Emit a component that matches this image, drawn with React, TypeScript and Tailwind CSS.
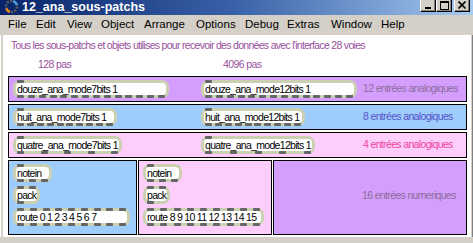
import React from 'react'

const font = { fontFamily: '"Liberation Sans", Arial, sans-serif' }

function spots(w: number, n: number) {
  if (n === 0) return []
  if (n === 1) return [4]
  const span = w - 8 - 7
  return Array.from({ length: n }, (_, i) => 4 + (span * i) / (n - 1))
}

type BoxProps = {
  label: string
  w: number
  top?: number[]
  bottom?: number[]
}

const ObjBox = ({ label, w, top = [], bottom = [] }: BoxProps) => {
  return (
    <div
      className="relative h-[18px] shrink-0 rounded-[7px] border-[3px] border-[#cbd0b2] bg-white flex items-center pl-px text-[10.5px] tracking-[-0.7px] leading-none text-black whitespace-nowrap"
      style={{ width: w }}
    >
      {label}
      {top.map((x, i) => (
        <span
          key={'t' + i}
          className="absolute top-[-3px] h-[3px] w-[7px] rounded-[1px] bg-[#666666]"
          style={{ left: x - 3 }}
        />
      ))}
      {bottom.map((x, i) => (
        <span
          key={'b' + i}
          className="absolute bottom-[-3px] h-[3px] w-[7px] rounded-[1px] bg-[#666666]"
          style={{ left: x - 3 }}
        />
      ))}
    </div>
  )
}

const Row = ({
  bg,
  left,
  right,
  text,
  color,
}: {
  bg: string
  left: React.ReactNode
  right: React.ReactNode
  text: string
  color: string
}) => {
  return (
    <div className={`h-[26px] border border-black flex items-center pl-[4px] ${bg}`}>
      <div className="w-[188px]">{left}</div>
      <div className="w-[162px]">{right}</div>
      <p className={`text-[10.5px] tracking-[-0.65px] ${color}`}>{text}</p>
    </div>
  )
}

const WinBtn = ({ children }: { children: React.ReactNode }) => (
  <div className="w-[16px] h-[14px] bg-[#d4d0c8] border border-t-white border-l-white border-r-black border-b-black shadow-[inset_-1px_-1px_#808080] flex items-center justify-center">
    {children}
  </div>
)

function App() {
  const menu: [string, number][] = [
    ['File', 28],
    ['Edit', 31],
    ['View', 34],
    ['Object', 43],
    ['Arrange', 52],
    ['Options', 49],
    ['Debug', 42],
    ['Extras', 44],
    ['Window', 50],
    ['Help', 40],
  ]

  return (
    <div className="w-[473px] h-[243px] overflow-hidden bg-[#d4d0c8] flex flex-col" style={font}>
      {/* title bar */}
      <div className="h-[15px] bg-linear-to-r from-[#0a246a] via-[#3a62a8] to-[#a6caf0] flex items-start">
        <svg className="ml-[4px] mt-[-1px]" width="15" height="15" viewBox="0 0 15 15">
          <circle cx="7.5" cy="7.5" r="5.5" fill="none" stroke="#5a5a5a" strokeWidth="2.4" strokeDasharray="2.2 1.2" />
          <path d="M2.3 9.5 A5.5 5.5 0 0 0 6 12.8" fill="none" stroke="#f08a1c" strokeWidth="2.4" />
          <path d="M9 2.2 A5.5 5.5 0 0 1 12.8 6" fill="none" stroke="#4aa0e0" strokeWidth="2.4" />
        </svg>
        <span className="ml-[3px] text-[12.5px] font-bold text-white leading-[14px]">12_ana_sous-patchs</span>
        <div className="ml-auto mr-[3px] mt-[-2px] flex">
          <WinBtn>
            <svg width="8" height="8" viewBox="0 0 8 8">
              <rect x="1" y="6" width="6" height="2" fill="black" />
            </svg>
          </WinBtn>
          <WinBtn>
            <svg width="9" height="9" viewBox="0 0 9 9">
              <rect x="0.5" y="0.5" width="8" height="8" fill="none" stroke="black" />
              <rect x="0" y="0" width="9" height="2" fill="black" />
            </svg>
          </WinBtn>
          <div className="w-[2px]" />
          <WinBtn>
            <svg width="8" height="8" viewBox="0 0 8 8">
              <path d="M0.5 0.5 L7.5 7.5 M7.5 0.5 L0.5 7.5" stroke="black" strokeWidth="1.6" />
            </svg>
          </WinBtn>
        </div>
      </div>

      {/* menu bar */}
      <div className="h-[20px] flex items-center pl-[8px] text-[11.5px] text-black">
        {menu.map(([m, w]) => (
          <span key={m} style={{ width: w }}>
            {m}
          </span>
        ))}
      </div>

      {/* body */}
      <div className="flex h-[202px]">
        <div className="w-[3px] border-l border-white" />
        <div className="w-[468px] bg-white pt-[4px] pl-[5px] pr-[4px]">
          <p className="h-[12px] leading-[12px] pl-[3px] text-[10.5px] tracking-[-0.7px] text-[#98509c]">
            Tous les sous-patchs et objets utilises pour recevoir des données avec l'interface 28 voies
          </p>
          <div className="mt-[7px] h-[12px] flex text-[10.5px] tracking-[-0.6px] leading-[12px] text-[#98509c]">
            <span className="w-[215px] pl-[30px]">128 pas</span>
            <span>4096 pas</span>
          </div>

          <div className="mt-[6px] flex flex-col gap-[2px]">
            <Row
              bg="bg-[#d49ffc]"
              left={<ObjBox label="douze_ana_mode7bits 1" w={156} top={[4]} bottom={spots(156, 14)} />}
              right={<ObjBox label="douze_ana_mode12bits 1" w={156} top={[4]} bottom={spots(156, 14)} />}
              text="12 entrées analogiques"
              color="text-[#8c6c9c]"
            />
            <Row
              bg="bg-[#9fcdfb]"
              left={<ObjBox label="huit_ana_mode7bits 1" w={104} top={[4]} bottom={spots(104, 10)} />}
              right={<ObjBox label="huit_ana_mode12bits 1" w={104} top={[4]} bottom={spots(104, 10)} />}
              text="8 entrées analogiques"
              color="text-[#5552cc]"
            />
            <Row
              bg="bg-[#fdcdfb]"
              left={<ObjBox label="quatre_ana_mode7bits 1" w={109} top={[4]} bottom={spots(109, 5)} />}
              right={<ObjBox label="quatre_ana_mode12bits 1" w={114} top={[4]} bottom={spots(114, 5)} />}
              text="4 entrées analogiques"
              color="text-[#f0439f]"
            />

            <div className="h-[75px] flex gap-px">
              <div className="w-[129px] border border-black bg-[#9fcdfb] pt-[3px] pl-[4px] flex flex-col gap-[4px]">
                <ObjBox label="notein" w={39} top={[4]} bottom={spots(39, 3)} />
                <ObjBox label="pack" w={27} top={spots(27, 2)} bottom={[4]} />
                <ObjBox label="route 0 1 2 3 4 5 6 7" w={117} top={spots(117, 9)} bottom={spots(117, 9)} />
              </div>
              <div className="w-[134px] border border-black bg-[#fdcdfb] pt-[3px] pl-[4px] flex flex-col gap-[4px]">
                <ObjBox label="notein" w={39} top={[4]} bottom={spots(39, 3)} />
                <ObjBox label="pack" w={27} top={spots(27, 2)} bottom={[4]} />
                <ObjBox label="route 8 9 10 11 12 13 14 15" w={121} top={spots(121, 9)} bottom={spots(121, 9)} />
              </div>
              <div className="flex-1 border border-black bg-[#d49ffc] flex items-center pl-[88px] pb-[4px]">
                <p className="text-[10.5px] tracking-[-0.65px] text-[#8c6c9c]">16 entrées numeriques</p>
              </div>
            </div>
          </div>
        </div>
        <div className="w-[2px] border-r border-[#808080]" />
      </div>
    </div>
  )
}

export default App
